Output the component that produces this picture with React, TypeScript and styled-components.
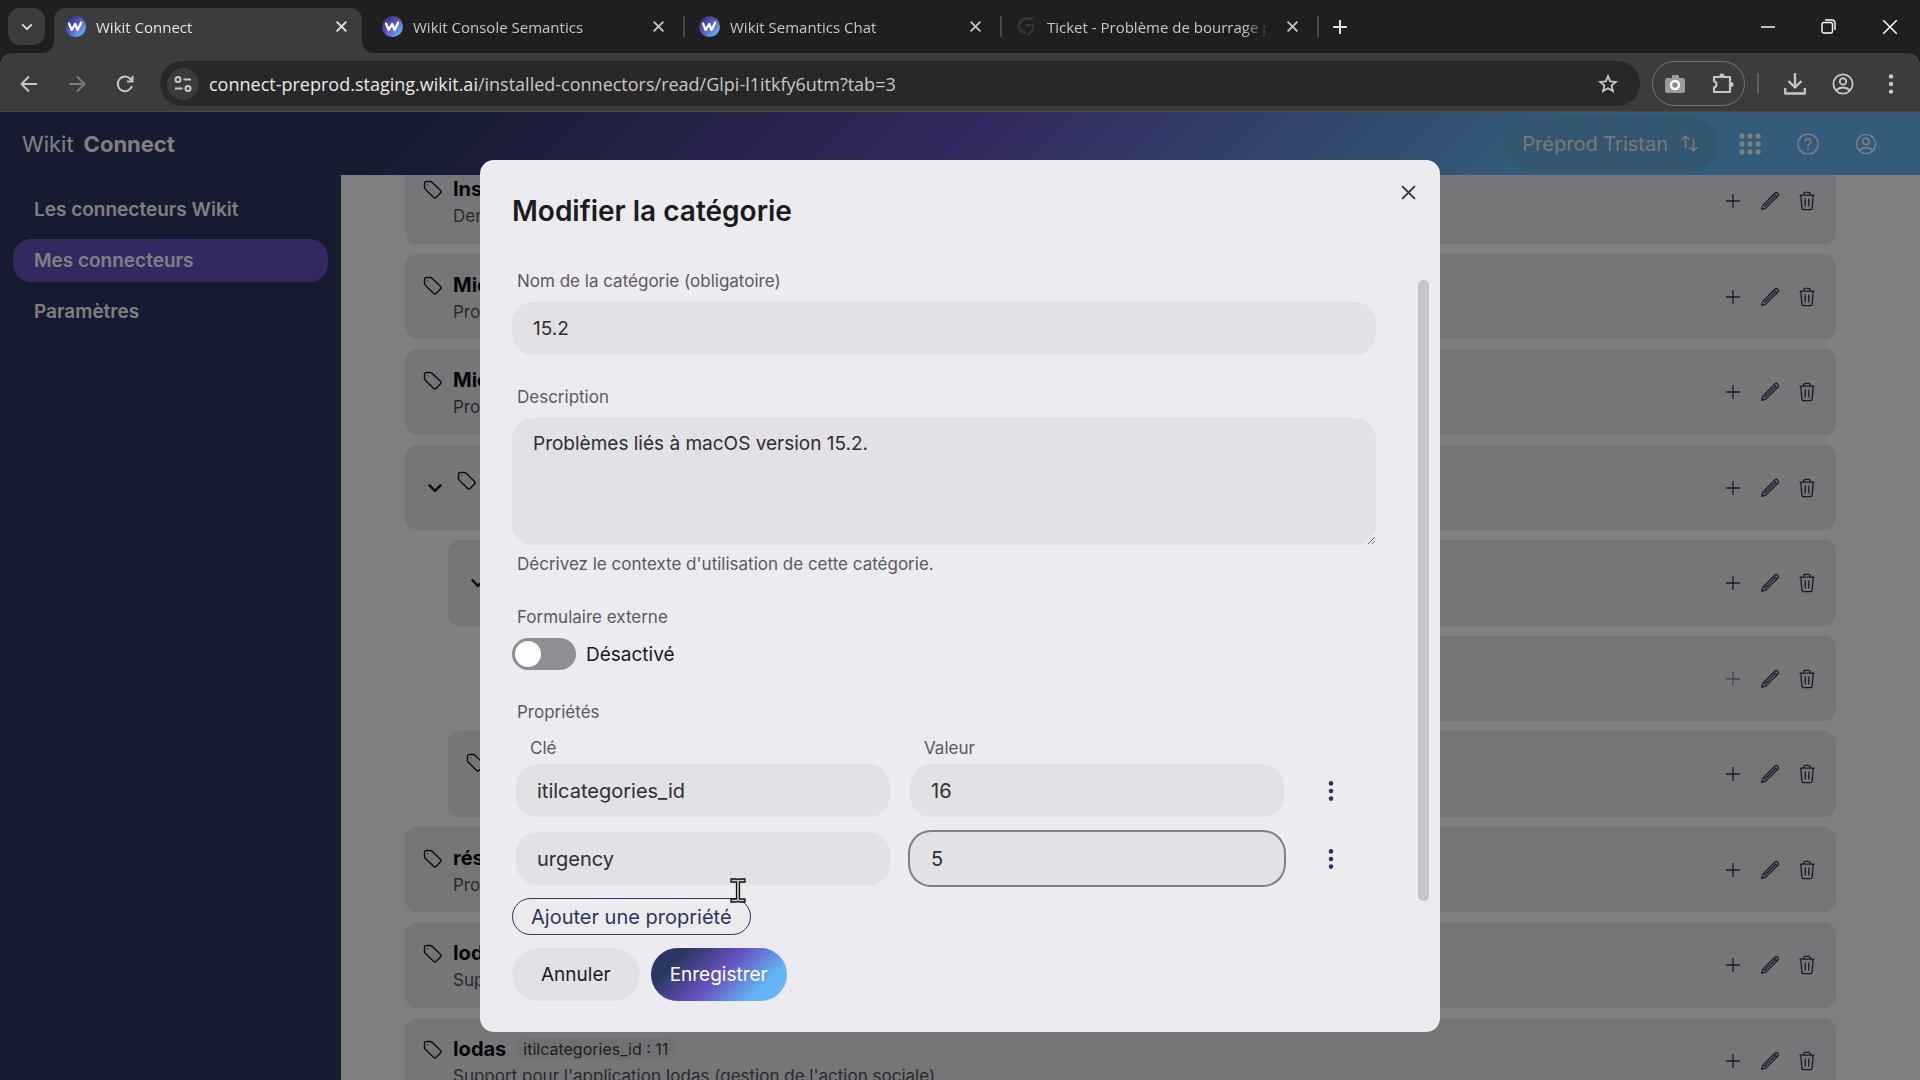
import React, { useId, useState } from "react";
import styled, { createGlobalStyle, css } from "styled-components";

const uiFont = `Inter, "Noto Sans", sans-serif`;
const chromeFont = `"Open Sans", "Noto Sans", sans-serif`;

const GlobalStyle = createGlobalStyle`
  *, *::before, *::after { box-sizing: border-box; }
  html, body, #root { height: 100%; }
  body { margin: 0; background: #1f1f1f; font-family: ${uiFont}; overflow: hidden; }
  button, input, textarea { font: inherit; color: inherit; }
  button { border: 0; padding: 0; background: none; cursor: pointer; }
  a { color: inherit; text-decoration: none; }
  h1, h2, h3, p, ul { margin: 0; padding: 0; }
  ul { list-style: none; }
  svg { display: block; flex: none; }
`;

const Window = styled.div`
  display: flex;
  flex-direction: column;
  height: 100vh;
`;

/* ---------- browser frame ---------- */

const TabStrip = styled.div`
  display: flex;
  align-items: flex-end;
  height: 53px;
  padding-left: 8px;
  background: #1f1f1f;
  color: #dedede;
  font-family: ${chromeFont};
`;

const TabSearch = styled.button`
  display: grid;
  place-items: center;
  width: 37px;
  height: 37px;
  margin: 0 9px 8px 0;
  border-radius: 12px;
  background: #3c3c3c;
`;

const Tab = styled.div<{ $active?: boolean; $divider?: boolean }>`
  position: relative;
  display: flex;
  align-items: center;
  gap: 10px;
  width: 308px;
  height: 45px;
  margin-right: 9px;
  padding: 0 8px 8px 11px;
  border-radius: 12px 12px 0 0;
  font-size: 15px;
  color: #c7c7c7;

  ${(p) =>
    p.$active &&
    css`
      background: #3c3c3c;
      color: #e3e3e3;
      &::before,
      &::after {
        content: "";
        position: absolute;
        bottom: 0;
        width: 12px;
        height: 12px;
      }
      &::before {
        left: -12px;
        background: radial-gradient(circle at 0 0, transparent 12px, #3c3c3c 12px);
      }
      &::after {
        right: -12px;
        background: radial-gradient(circle at 100% 0, transparent 12px, #3c3c3c 12px);
      }
    `}

  ${(p) =>
    p.$divider &&
    css`
      &::after {
        content: "";
        position: absolute;
        right: -6px;
        top: 8px;
        width: 2px;
        height: 21px;
        background: #474747;
      }
    `}
`;

const TabTitle = styled.span`
  flex: 1;
  min-width: 0;
  overflow: hidden;
  white-space: nowrap;
  mask-image: linear-gradient(to right, #000 88%, transparent);
`;

const TabClose = styled.button`
  display: grid;
  place-items: center;
  width: 26px;
  height: 26px;
`;

const NewTab = styled.button`
  display: grid;
  place-items: center;
  width: 36px;
  height: 37px;
  margin-bottom: 8px;
`;

const WindowControls = styled.div`
  display: flex;
  align-self: stretch;
  margin-left: auto;
  color: #fff;
`;

const WindowButton = styled.button`
  display: grid;
  place-items: center;
  width: 61px;
`;

const Toolbar = styled.div`
  display: flex;
  align-items: center;
  height: 59px;
  padding: 3px 5px 0;
  border-bottom: 1px solid #484848;
  border-radius: 12px 12px 0 0;
  background: #3c3c3c;
  color: #c7c7c7;
`;

const ToolButton = styled.button<{ $dim?: boolean }>`
  display: grid;
  flex: none;
  place-items: center;
  width: 48px;
  height: 45px;
  color: ${(p) => (p.$dim ? "#7c7c7c" : "#c7c7c7")};
`;

const AddressBar = styled.div`
  display: flex;
  flex: 1;
  align-items: center;
  height: 45px;
  margin: 0 12px 0 11px;
  padding: 0 8px 0 7px;
  border-radius: 23px;
  background: #282828;
`;

const SiteInfo = styled.button`
  display: grid;
  place-items: center;
  width: 32px;
  height: 32px;
  border-radius: 50%;
  background: #3c3c3c;
`;

const Address = styled.div`
  flex: 1;
  padding-left: 10px;
  font-family: ${chromeFont};
  font-size: 18px;
  line-height: 24px;
  color: #c7c7c7;
`;

const Host = styled.span`
  color: #e8e8e8;
`;

const ExtensionGroup = styled.div`
  display: flex;
  align-items: center;
  justify-content: center;
  width: 93px;
  height: 45px;
  border: 1px solid #757575;
  border-radius: 23px;
`;

const ToolDivider = styled.span`
  width: 2px;
  height: 21px;
  margin: 0 12px;
  background: #5e5e5e;
`;

/* ---------- application ---------- */

const Viewport = styled.div`
  position: relative;
  display: flex;
  flex: 1;
  flex-direction: column;
  min-height: 0;
  overflow: hidden;
  background: #feffff;
`;

const AppHeader = styled.header`
  display: flex;
  align-items: center;
  flex: none;
  height: 63px;
  padding: 0 25px 0 22px;
  background: linear-gradient(135deg, #2b3660 20%, #6650be 50%, #64b8f4 80%);
  color: #fff;
`;

const Brand = styled.div`
  display: flex;
  flex: 1;
  gap: 10px;
  font-size: 22px;
  line-height: 28px;
`;

const BrandName = styled.strong`
  font-weight: 700;
`;

const Workspace = styled.button`
  display: flex;
  align-items: center;
  gap: 12px;
  height: 53px;
  margin-right: 4px;
  padding: 0 18px;
  border-radius: 27px;
  background: #66aee0;
  color: #f4f0f0;
  font-size: 20px;
`;

const HeaderButton = styled.button`
  display: grid;
  place-items: center;
  width: 58px;
  height: 48px;
`;

const AppBody = styled.div`
  display: flex;
  flex: 1;
  min-height: 0;
`;

const Sidebar = styled.nav`
  display: flex;
  flex-direction: column;
  gap: 8px;
  flex: none;
  width: 341px;
  padding: 13px;
  background: #2b3660;
  color: #fff;
`;

const NavLink = styled.a<{ $active?: boolean }>`
  display: flex;
  align-items: center;
  height: 43px;
  padding: 0 21px;
  border-radius: 18px;
  background: ${(p) => (p.$active ? "#6650be" : "transparent")};
  font-size: 19px;
  font-weight: 600;
`;

const Main = styled.main`
  flex: 1;
  min-width: 0;
  overflow: hidden;
  padding: 0 84px 0 64px;
`;

const CategoryList = styled.ul`
  display: flex;
  flex-direction: column;
  gap: 10px;
  margin-top: -17px;
`;

const Category = styled.li<{ $level: number }>`
  display: flex;
  gap: 10px;
  height: 86px;
  margin-left: ${(p) => p.$level * 43}px;
  padding: 17px 11px 0 18px;
  border-radius: 12px;
  background: #ecebee;
  color: #1b1b20;
  &:nth-child(even) { height: 85px; }
`;

const Toggle = styled.button`
  display: grid;
  place-items: center;
  width: 24px;
  height: 52px;
`;

const TagSlot = styled.span<{ $lowered?: boolean }>`
  padding-top: ${(p) => (p.$lowered ? 9 : 5)}px;
`;

const CategoryText = styled.div`
  flex: 1;
  min-width: 0;
`;

const CategoryHead = styled.div`
  display: flex;
  align-items: center;
  gap: 8px;
  height: 28px;
`;

const CategoryName = styled.h3`
  font-size: 20px;
  font-weight: 700;
  color: #0a0a0a;
`;

const Chip = styled.span`
  padding: 0 9px;
  border-radius: 11px;
  background: #e2e1e5;
  font-size: 16px;
  line-height: 22px;
  color: #3c3c42;
`;

const CategoryDescription = styled.p`
  font-size: 17px;
  line-height: 26px;
  color: #55555c;
`;

const Actions = styled.div`
  display: flex;
  height: 52px;
  color: #2b3660;
`;

const IconButton = styled.button`
  display: grid;
  place-items: center;
  width: 37px;
  &:disabled { opacity: 0.5; }
`;

/* ---------- dialog ---------- */

const Scrim = styled.div`
  position: absolute;
  inset: 0;
  display: grid;
  place-items: center;
  background: rgba(0, 0, 0, 0.5);
`;

const Dialog = styled.form`
  display: flex;
  flex-direction: column;
  width: 50%;
  height: 90%;
  padding: 33px 11px 31px 32px;
  border-radius: 14px;
  background: #ecebf0;
  color: #1b1b20;
`;

const DialogHeader = styled.div`
  display: flex;
  align-items: flex-start;
  justify-content: space-between;
  height: 77px;
`;

const DialogTitle = styled.h2`
  font-size: 28px;
  font-weight: 600;
  line-height: 36px;
`;

const CloseButton = styled.button`
  display: grid;
  place-items: center;
  width: 42px;
  height: 42px;
  margin-top: -22px;
  color: #2b3660;
`;

const DialogBody = styled.div`
  display: flex;
  flex: 1;
  justify-content: space-between;
  gap: 42px;
  min-height: 0;
`;

const Fields = styled.div`
  display: flex;
  flex: 1;
  flex-direction: column;
  gap: 31px;
  min-width: 0;
`;

const ScrollTrack = styled.div`
  width: 11px;
  padding-top: 10px;
`;

const ScrollThumb = styled.div`
  height: 93%;
  border-radius: 6px;
  background: #c5c4c9;
`;

const Field = styled.div`
  display: flex;
  flex-direction: column;
`;

const Label = styled.label`
  margin-bottom: 10px;
  padding-left: 5px;
  font-size: 17px;
  line-height: 22px;
  color: #5a5a60;
`;

const Hint = styled.p`
  margin-top: 8px;
  padding-left: 5px;
  font-size: 17px;
  line-height: 22px;
  color: #5a5a60;
`;

const controlStyle = css`
  width: 100%;
  border: 0;
  border-radius: 21px;
  background: #e2e1e6;
  color: #2e2e33;
  font-size: 19px;
  line-height: 26px;
  outline: 0;
`;

const TextInput = styled.input<{ $focused?: boolean }>`
  ${controlStyle}
  height: 53px;
  padding: 0 21px;
  box-shadow: ${(p) => (p.$focused ? "0 0 0 2px #808084" : "none")};
`;

const TextArea = styled.textarea`
  ${controlStyle}
  display: block;
  height: 127px;
  padding: 13px 21px;
  resize: vertical;
`;

const SwitchRow = styled.label`
  display: flex;
  align-items: center;
  gap: 10px;
  height: 32px;
  font-size: 19px;
`;

const Switch = styled.input`
  appearance: none;
  display: flex;
  align-items: center;
  width: 64px;
  height: 32px;
  margin: 0;
  padding: 0 3px;
  border-radius: 16px;
  background: #8f8e93;
  &::before {
    content: "";
    width: 26px;
    height: 26px;
    border-radius: 50%;
    background: #fdfcff;
  }
  &:checked { justify-content: flex-end; background: #6650be; }
`;

const PropertyGrid = styled.div`
  display: grid;
  grid-template-columns: 1fr 1fr 72px;
  column-gap: 20px;
  row-gap: 15px;
  margin: 4px 0 13px 4px;
  ${TextInput} { font-size: 20px; }
`;

const ColumnLabels = styled(PropertyGrid)`
  margin: 4px 0 1px 4px;
`;

const ColumnLabel = styled.label`
  padding-left: 14px;
  font-size: 17px;
  line-height: 22px;
  color: #5a5a60;
`;

const KebabButton = styled.button`
  display: grid;
  place-items: center;
  width: 54px;
  color: #2b3660;
`;

const OutlineButton = styled.button`
  align-self: flex-start;
  height: 37px;
  padding: 0 18px;
  border: 1px solid #2b3660;
  border-radius: 19px;
  color: #2b3660;
  font-size: 20px;
`;

const DialogFooter = styled.div`
  display: flex;
  gap: 11px;
`;

const FooterButton = styled.button<{ $primary?: boolean }>`
  height: 53px;
  padding: 0 ${(p) => (p.$primary ? 19 : 29)}px;
  border-radius: 27px;
  background: ${(p) =>
    p.$primary ? "linear-gradient(135deg, #2b3762 20%, #6552c0 50%, #64b5f6 80%)" : "#e2e1e6"};
  color: ${(p) => (p.$primary ? "#fff" : "#1b1b20")};
  font-size: 19px;
`;

const TextCursor = styled.svg`
  position: absolute;
  left: 38%;
  top: 766px;
`;

/* ---------- icons ---------- */

type StrokeProps = { size: number; box?: number; width?: number; children: React.ReactNode };

const Stroke = ({ size, box = 24, width = 2, children }: StrokeProps) => (
  <svg
    width={size}
    height={size}
    viewBox={`0 0 ${box} ${box}`}
    fill="none"
    stroke="currentColor"
    strokeWidth={width}
    strokeLinejoin="round"
    aria-hidden="true"
  >
    {children}
  </svg>
);

const CrossIcon = ({ size, width = 2 }: { size: number; width?: number }) => (
  <Stroke size={size} box={16} width={width}>
    <path d="M2 2l12 12M14 2L2 14" />
  </Stroke>
);

const ChevronIcon = ({ size }: { size: number }) => (
  <Stroke size={size} box={16} width={2.2}>
    <path d="M2.500 5l5.500 5.500L13.500 5" />
  </Stroke>
);

const TagIcon = () => (
  <Stroke size={20} box={20} width={1.4}>
    <path d="M1.500 3.500Q1.500 1.500 3.500 1.500L7.300 1.500Q8.300 1.500 9 2.200L17.400 10.300Q18.800 11.700 17.400 13.100L13.300 17.300Q11.900 18.700 10.500 17.300L2.300 9.200Q1.500 8.400 1.500 7.500Z" />
    <circle cx="4.600" cy="4.600" r=".6" fill="currentColor" stroke="none" />
  </Stroke>
);

const PlusIcon = () => (
  <Stroke size={16} box={16} width={1.3}>
    <path d="M8 1v14M1 8h14" />
  </Stroke>
);

const PencilIcon = () => (
  <Stroke size={20} box={20} width={1.3}>
    <path d="M1.600 18.400L2.900 14.200L15 2Q16.400 .9 17.800 2.200Q19.100 3.600 18 5L5.800 17.100ZM14 3l3 3M4.300 15.700L15.600 4.400" />
  </Stroke>
);

const TrashIcon = () => (
  <Stroke size={20} box={20} width={1.3}>
    <path d="M2.500 4.200h15M6.500 4.200Q6.500 1.300 8.500 1.300h3Q13.500 1.300 13.500 4.200M3.800 4.200l1 12.500Q5 18.700 7 18.700h6Q15 18.700 15.200 16.700L16.200 4.200M8.200 7.500v8M11.800 7.500v8" />
  </Stroke>
);

const DotsIcon = ({ radius, step }: { radius: number; step: number }) => (
  <svg width="8" height="24" viewBox="0 0 8 24" fill="currentColor" aria-hidden="true">
    {[-1, 0, 1].map((n) => (
      <circle key={n} cx="4" cy={12 + n * step} r={radius} />
    ))}
  </svg>
);

const AccountIcon = ({ size, width }: { size: number; width: number }) => (
  <Stroke size={size} width={width}>
    <circle cx="12" cy="12" r="10.500" />
    <circle cx="12" cy="9.200" r="3.500" />
    <path d="M4.800 19Q7.500 15.800 12 15.800T19.200 19" />
  </Stroke>
);

const WikitLogo = () => {
  const id = useId();
  return (
    <svg width="21" height="21" viewBox="0 0 21 21" aria-hidden="true">
      <defs>
        <linearGradient id={id} x1="0" y1="0" x2="1" y2="1">
          <stop offset=".15" stopColor="#2f3a75" />
          <stop offset=".5" stopColor="#6358c8" />
          <stop offset=".85" stopColor="#5cb2f5" />
        </linearGradient>
      </defs>
      <circle cx="10.500" cy="10.500" r="10.500" fill={`url(#${id})`} />
      <path
        d="M4 7.500l2.700 6.500 3.500-6 2.300 6 3.300-6.500"
        fill="none"
        stroke="#fff"
        strokeWidth="2.300"
        strokeLinejoin="round"
        strokeLinecap="round"
      />
      <circle cx="16" cy="6.800" r="1.200" fill="#fff" />
    </svg>
  );
};

const TicketLogo = () => (
  <svg width="21" height="21" viewBox="0 0 21 21" fill="none" stroke="#333" strokeWidth="3" aria-hidden="true">
    <path d="M17.500 2.500H11Q3.500 3.500 3 9.500T9.500 16.500" />
    <path d="M9.500 9h7.500v3Q16 17 11 19" strokeWidth="2" />
  </svg>
);

/* ---------- data ---------- */

const tabs = [
  { title: "Wikit Connect", active: true },
  { title: "Wikit Console Semantics", divider: true },
  { title: "Wikit Semantics Chat", divider: true },
  { title: "Ticket - Problème de bourrage p", divider: true, ticket: true },
];

type CategoryItem = {
  level: number;
  name?: string;
  description?: string;
  chip?: string;
  expandable?: boolean;
  lowered?: boolean;
  leaf?: boolean;
};

const categories: CategoryItem[] = [
  { level: 0, name: "Inst", description: "Dem" },
  { level: 0, name: "Mic", description: "Pro" },
  { level: 0, name: "Mic", description: "Pro" },
  { level: 0, expandable: true },
  { level: 1, expandable: true },
  { level: 2, leaf: true },
  { level: 1 },
  { level: 0, name: "rés", description: "Pro" },
  { level: 0, name: "Iod", description: "Sup" },
  {
    level: 0,
    name: "Iodas",
    chip: "itilcategories_id : 11",
    description: "Support pour l'application Iodas (gestion de l'action sociale)",
  },
];

/* ---------- parts ---------- */

const BrowserFrame = () => (
  <>
    <TabStrip>
      <TabSearch aria-label="Rechercher dans les onglets">
        <ChevronIcon size={14} />
      </TabSearch>
      {tabs.map((tab) => (
        <Tab key={tab.title} $active={tab.active} $divider={tab.divider}>
          {tab.ticket ? <TicketLogo /> : <WikitLogo />}
          <TabTitle>{tab.title}</TabTitle>
          <TabClose aria-label="Fermer l'onglet">
            <CrossIcon size={13} width={2.2} />
          </TabClose>
        </Tab>
      ))}
      <NewTab aria-label="Nouvel onglet">
        <Stroke size={16} box={16}>
          <path d="M8 1v14M1 8h14" />
        </Stroke>
      </NewTab>
      <WindowControls>
        <WindowButton aria-label="Réduire">
          <Stroke size={14} box={14} width={1.4}>
            <path d="M0 7h14" />
          </Stroke>
        </WindowButton>
        <WindowButton aria-label="Restaurer">
          <Stroke size={15} box={15} width={1.4}>
            <rect x="1" y="3.500" width="10.500" height="10.500" rx="2" />
            <path d="M4 1h6.500Q14 1 14 4.500V11" />
          </Stroke>
        </WindowButton>
        <WindowButton aria-label="Fermer">
          <CrossIcon size={18} width={1.3} />
        </WindowButton>
      </WindowControls>
    </TabStrip>
    <Toolbar>
      <ToolButton aria-label="Retour">
        <Stroke size={18} box={18}>
          <path d="M17 9H2M9 1.500L1.500 9 9 16.500" />
        </Stroke>
      </ToolButton>
      <ToolButton $dim aria-label="Avancer">
        <Stroke size={18} box={18}>
          <path d="M1 9h15M9 1.500L16.500 9 9 16.500" />
        </Stroke>
      </ToolButton>
      <ToolButton aria-label="Actualiser">
        <Stroke size={18} box={18}>
          <path d="M16 11A7.300 7.300 0 1 1 14.500 4L16 6M16.500 1v5.500H11" />
        </Stroke>
      </ToolButton>
      <AddressBar>
        <SiteInfo aria-label="Informations sur le site">
          <Stroke size={18} box={18}>
            <circle cx="4" cy="4.500" r="2.500" />
            <path d="M9.500 4.500H17M1 13.500h7.500" />
            <circle cx="14" cy="13.500" r="2.500" />
          </Stroke>
        </SiteInfo>
        <Address>
          <Host>connect-preprod.staging.wikit.ai</Host>/installed-connectors/read/Glpi-l1itkfy6utm?tab=3
        </Address>
        <ToolButton aria-label="Ajouter aux favoris">
          <Stroke size={22} width={2}>
            <path strokeLinejoin="miter" d="M12 3.500l2.400 5.700 6.100.5-4.600 4.100 1.400 6L12 16.600l-5.300 3.200 1.400-6-4.600-4.100 6.100-.5z" />
          </Stroke>
        </ToolButton>
      </AddressBar>
      <ExtensionGroup>
        <ToolButton aria-label="Capture d'écran">
          <svg width="20" height="19" viewBox="0 0 20 19" aria-hidden="true">
            <path d="M2 4Q0 4 0 6v11Q0 19 2 19h16q2 0 2-2V6q0-2-2-2h-4V2q0-1-1-1H8Q7 1 7 2v2z" fill="#9c9c9c" />
            <circle cx="10" cy="11" r="4" fill="#8a8a8a" stroke="#fff" strokeWidth="2.400" />
          </svg>
        </ToolButton>
        <ToolButton aria-label="Extensions">
          <Stroke size={24} width={2.2}>
            <path d="M3 5h16v15H3v-4.300q2.500-.5 2.500-3.200T3 9.200z" />
            <path d="M8.500 4a2.500 2.500 0 0 1 5 0zM20 10a2.500 2.500 0 0 1 0 5z" fill="currentColor" stroke="none" />
          </Stroke>
        </ToolButton>
      </ExtensionGroup>
      <ToolDivider />
      <ToolButton aria-label="Téléchargements">
        <Stroke size={22} box={22} width={2.3}>
          <path d="M11 0v14M4.500 8L11 14.500 17.500 8M1.200 15v5.500h19.600V15" />
        </Stroke>
      </ToolButton>
      <ToolButton aria-label="Profil">
        <AccountIcon size={22} width={2} />
      </ToolButton>
      <ToolButton aria-label="Menu">
        <DotsIcon radius={2.2} step={7.6} />
      </ToolButton>
    </Toolbar>
  </>
);

const CategoryRow = ({ item }: { item: CategoryItem }) => (
  <Category $level={item.level}>
    {item.expandable && (
      <Toggle aria-label="Replier">
        <ChevronIcon size={18} />
      </Toggle>
    )}
    <TagSlot $lowered={item.expandable}>
      <TagIcon />
    </TagSlot>
    <CategoryText>
      {item.name && (
        <CategoryHead>
          <CategoryName>{item.name}</CategoryName>
          {item.chip && <Chip>{item.chip}</Chip>}
        </CategoryHead>
      )}
      {item.description && <CategoryDescription>{item.description}</CategoryDescription>}
    </CategoryText>
    <Actions>
      <IconButton aria-label="Ajouter" disabled={item.leaf}>
        <PlusIcon />
      </IconButton>
      <IconButton aria-label="Modifier">
        <PencilIcon />
      </IconButton>
      <IconButton aria-label="Supprimer">
        <TrashIcon />
      </IconButton>
    </Actions>
  </Category>
);

const CategoryDialog = () => {
  const [external, setExternal] = useState(false);
  return (
    <Scrim>
      <Dialog role="dialog" aria-modal="true" aria-labelledby="dialog-title" onSubmit={(e) => e.preventDefault()}>
        <DialogHeader>
          <DialogTitle id="dialog-title">Modifier la catégorie</DialogTitle>
          <CloseButton type="button" aria-label="Fermer">
            <CrossIcon size={17} width={1.9} />
          </CloseButton>
        </DialogHeader>
        <DialogBody>
          <Fields>
            <Field>
              <Label htmlFor="name">Nom de la catégorie (obligatoire)</Label>
              <TextInput id="name" defaultValue="15.2" />
            </Field>
            <Field>
              <Label htmlFor="description">Description</Label>
              <TextArea id="description" defaultValue="Problèmes liés à macOS version 15.2." />
              <Hint>Décrivez le contexte d'utilisation de cette catégorie.</Hint>
            </Field>
            <Field>
              <Label htmlFor="external">Formulaire externe</Label>
              <SwitchRow>
                <Switch
                  id="external"
                  type="checkbox"
                  role="switch"
                  checked={external}
                  onChange={(e) => setExternal(e.target.checked)}
                />
                {external ? "Activé" : "Désactivé"}
              </SwitchRow>
            </Field>
            <Field>
              <Label as="span">Propriétés</Label>
              <ColumnLabels>
                <ColumnLabel htmlFor="key-1">Clé</ColumnLabel>
                <ColumnLabel htmlFor="value-1">Valeur</ColumnLabel>
              </ColumnLabels>
              <PropertyGrid>
                <TextInput id="key-1" defaultValue="itilcategories_id" />
                <TextInput id="value-1" defaultValue="16" />
                <KebabButton type="button" aria-label="Options">
                  <DotsIcon radius={2.3} step={7.6} />
                </KebabButton>
                <TextInput aria-label="Clé" defaultValue="urgency" />
                <TextInput aria-label="Valeur" defaultValue="5" $focused />
                <KebabButton type="button" aria-label="Options">
                  <DotsIcon radius={2.3} step={7.6} />
                </KebabButton>
              </PropertyGrid>
              <OutlineButton type="button">Ajouter une propriété</OutlineButton>
            </Field>
          </Fields>
          <ScrollTrack>
            <ScrollThumb />
          </ScrollTrack>
        </DialogBody>
        <DialogFooter>
          <FooterButton type="button">Annuler</FooterButton>
          <FooterButton type="submit" $primary>
            Enregistrer
          </FooterButton>
        </DialogFooter>
      </Dialog>
      <TextCursor width="16" height="25" viewBox="0 0 16 25" aria-hidden="true">
        <path
          d="M1 1h5.500L8 1.500 9.500 1H15v3H9.500v17H15v3H9.500L8 23.500 6.500 24H1v-3h5.500V4H1z"
          fill="#c9c8c4"
          stroke="#111"
          strokeWidth="1.300"
        />
      </TextCursor>
    </Scrim>
  );
};

export default function App() {
  return (
    <Window>
      <GlobalStyle />
      <BrowserFrame />
      <Viewport>
        <AppHeader>
          <Brand>
            Wikit <BrandName>Connect</BrandName>
          </Brand>
          <Workspace>
            Préprod Tristan
            <Stroke size={19} box={19} width={1.5}>
              <path d="M5.500 14V2M1.500 6l4-4 4 4M13.500 5v12M9.500 13l4 4 4-4" />
            </Stroke>
          </Workspace>
          <HeaderButton aria-label="Applications">
            <svg width="22" height="22" viewBox="0 0 22 22" fill="currentColor" aria-hidden="true">
              {[3, 11, 19].map((y) => [3, 11, 19].map((x) => <circle key={`${x}-${y}`} cx={x} cy={y} r="2.700" />))}
            </svg>
          </HeaderButton>
          <HeaderButton aria-label="Aide">
            <Stroke size={22} width={1.6}>
              <circle cx="12" cy="12" r="11" />
              <path d="M8.800 9.200Q9 6.200 12 6.200T15.200 9.200Q15.200 10.800 13.500 11.800T12 14.300" />
              <circle cx="12" cy="17.300" r=".5" fill="currentColor" />
            </Stroke>
          </HeaderButton>
          <HeaderButton aria-label="Compte">
            <AccountIcon size={22} width={1.6} />
          </HeaderButton>
        </AppHeader>
        <AppBody>
          <Sidebar>
            <NavLink href="#connecteurs-wikit">Les connecteurs Wikit</NavLink>
            <NavLink href="#mes-connecteurs" $active>
              Mes connecteurs
            </NavLink>
            <NavLink href="#parametres">Paramètres</NavLink>
          </Sidebar>
          <Main>
            <CategoryList>
              {categories.map((item, index) => (
                <CategoryRow key={index} item={item} />
              ))}
            </CategoryList>
          </Main>
        </AppBody>
        <CategoryDialog />
      </Viewport>
    </Window>
  );
}
